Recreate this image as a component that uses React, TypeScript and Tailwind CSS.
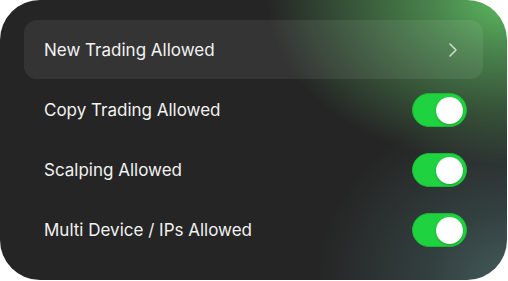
import { ChevronRight } from 'lucide-react';

const toggles = ['Copy Trading Allowed', 'Scalping Allowed', 'Multi Device / IPs Allowed'];

function Toggle() {
  return (
    <div className="w-[55px] h-[34px] rounded-full bg-[#1fd23f] border border-[#1bb535] flex items-center justify-end pr-[3px]">
      <div className="w-[27px] h-[27px] rounded-full bg-white shadow-[0_1px_2px_rgba(0,0,0,0.25)]" />
    </div>
  );
}

export default function App() {
  return (
    <div className="w-[508px] h-[281px] bg-white" style={{ fontFamily: 'Inter, "Noto Sans", sans-serif' }}>
      <div className="w-[507px] h-[280px] rounded-[40px] bg-[#252525] bg-[radial-gradient(ellipse_240px_165px_at_100%_0%,#5cba60_0%,rgba(88,170,92,0.72)_30%,rgba(37,37,37,0)_100%),radial-gradient(ellipse_190px_170px_at_100%_100%,#435a5a_0%,rgba(63,86,86,0.55)_40%,rgba(37,37,37,0)_100%)] px-6 py-5 flex flex-col">
        <div className="h-[59px] mb-px rounded-[13px] bg-white/[0.07] flex items-center justify-between pl-5 pr-[18px]">
          <span className="text-[17px] text-[#f2f2f2] pt-[2px]">New Trading Allowed</span>
          <ChevronRight size={24} strokeWidth={1.6} className="text-white/70" />
        </div>
        {toggles.map((t) => (
          <div key={t} className="h-[60px] flex items-center justify-between pl-5 pr-4">
            <span className="text-[17px] text-[#f2f2f2] pt-[2px]">{t}</span>
            <Toggle />
          </div>
        ))}
      </div>
    </div>
  );
}
